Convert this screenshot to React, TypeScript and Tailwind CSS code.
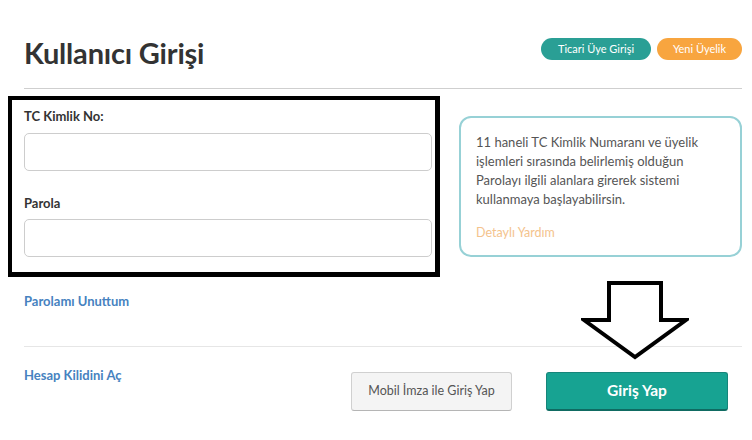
export default function App() {
  return (
    <div className="relative h-[440px] w-[752px] overflow-hidden bg-white font-['Lato','Noto_Sans',sans-serif] text-[#333]">
      <div className="pl-6 pr-[10px]">
        {/* header */}
        <div className="flex h-[89px] items-start justify-between border-b border-[#cfcfcf]">
          <h1 className="pt-[35px] text-[29px] leading-[36px] font-bold tracking-[-0.2px] text-[#333]">
            Kullanıcı Girişi
          </h1>
          <div className="flex gap-[6px] pt-[38px]">
            <a className="flex h-[22px] w-[110px] items-center justify-center rounded-full bg-[#2a9f95] text-[11px] text-white">
              Ticari Üye Girişi
            </a>
            <a className="flex h-[22px] w-[85px] items-center justify-center rounded-full bg-[#f8a53f] text-[11px] text-white">
              Yeni Üyelik
            </a>
          </div>
        </div>

        {/* body */}
        <div className="flex items-start gap-[19px]">
          <div className="-ml-4 w-[432px]">
            <div className="mt-[7px] border-t-4 border-r-[5px] border-b-[5px] border-l-4 border-black pt-[7px] pr-[3px] pb-[15px] pl-3">
              <label className="block text-[13px] leading-[18px] font-bold text-[#333]">TC Kimlik No:</label>
              <input className="mt-2 block h-[38px] w-full rounded-[5px] border border-[#cdcdcd] bg-white px-3 outline-none" />
              <label className="mt-[23px] block text-[13px] leading-[18px] font-bold text-[#333]">Parola</label>
              <input
                type="password"
                className="mt-[7px] block h-[38px] w-full rounded-[5px] border border-[#cdcdcd] bg-white px-3 outline-none"
              />
            </div>
            <a className="mt-[15px] ml-4 block text-[13px] leading-[18px] font-bold text-[#4682bf]">
              Parolamı Unuttum
            </a>
          </div>

          <div className="mt-[27px] h-[141px] w-[283px] rounded-[12px] border-2 border-[#97d1d6] pt-[15px] pl-[15px] pr-2">
            <p className="text-[13px] leading-[19px] text-[#555]">
              11 haneli TC Kimlik Numaranı ve üyelik
              <br />
              işlemleri sırasında belirlemiş olduğun
              <br />
              Parolayı ilgili alanlara girerek sistemi
              <br />
              kullanmaya başlayabilirsin.
            </p>
            <a className="mt-[14px] block text-[12.5px] leading-[19px] text-[#f4c38d]">Detaylı Yardım</a>
          </div>
        </div>

        {/* footer */}
        <div className="mt-[36px] flex items-start justify-between border-t border-[#e6e6e6] pr-[14px]">
          <a className="mt-[19px] text-[13px] leading-[18px] font-bold text-[#4682bf]">Hesap Kilidini Aç</a>
          <div className="mt-[25px] flex gap-[34px]">
            <button className="h-[39px] w-[161px] rounded-[3px] border border-[#d0d0d0] border-b-[#b5b5b5] bg-[#f4f4f4] text-[12.5px] text-[#555]">
              Mobil İmza ile Giriş Yap
            </button>
            <button className="h-[39px] w-[182px] rounded-[3px] border border-[#16857a] border-b-2 border-b-[#0f6b62] bg-[#17a392] text-[15.5px] font-bold text-white">
              Giriş Yap
            </button>
          </div>
        </div>
      </div>

      {/* annotation arrow */}
      <svg className="absolute top-[281px] left-[581px]" width="108" height="80" viewBox="0 0 108 80" fill="white">
        <path d="M28 2 H80 V39 H105 L54 76 L3 39 H28 Z" stroke="black" strokeWidth="4" strokeLinejoin="miter" />
      </svg>
    </div>
  );
}
